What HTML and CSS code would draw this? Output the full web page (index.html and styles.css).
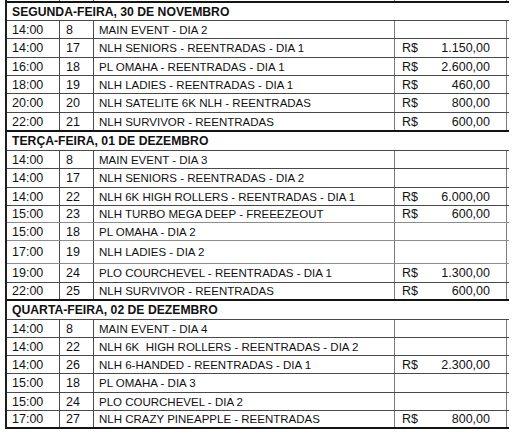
FILE: index.html
```html
<!DOCTYPE html>
<html lang="pt">
<head>
<meta charset="utf-8">
<title>Programação</title>
<link rel="stylesheet" href="styles.css">
</head>
<body>
<div class="sheet">
  <div class="row stub"><div class="c t"></div><div class="c n"></div><div class="c e"></div><div class="c p"></div></div>

  <div class="row head"><div class="hc">SEGUNDA-FEIRA, 30 DE NOVEMBRO</div></div>
  <div class="row"><div class="c t">14:00</div><div class="c n">8</div><div class="c e">MAIN EVENT - DIA 2</div><div class="c p"></div></div>
  <div class="row h19"><div class="c t">14:00</div><div class="c n">17</div><div class="c e">NLH SENIORS - REENTRADAS - DIA 1</div><div class="c p"><span>R$</span><span>1.150,00</span></div></div>
  <div class="row"><div class="c t">16:00</div><div class="c n">18</div><div class="c e">PL OMAHA - REENTRADAS - DIA 1</div><div class="c p"><span>R$</span><span>2.600,00</span></div></div>
  <div class="row"><div class="c t">18:00</div><div class="c n">19</div><div class="c e">NLH LADIES - REENTRADAS - DIA 1</div><div class="c p"><span>R$</span><span>460,00</span></div></div>
  <div class="row h19"><div class="c t">20:00</div><div class="c n">20</div><div class="c e">NLH SATELITE 6K NLH - REENTRADAS</div><div class="c p"><span>R$</span><span>800,00</span></div></div>
  <div class="row h19 end"><div class="c t">22:00</div><div class="c n">21</div><div class="c e">NLH SURVIVOR - REENTRADAS</div><div class="c p"><span>R$</span><span>600,00</span></div></div>

  <div class="row head h19"><div class="hc">TERÇA-FEIRA, 01 DE DEZEMBRO</div></div>
  <div class="row"><div class="c t">14:00</div><div class="c n">8</div><div class="c e">MAIN EVENT - DIA 3</div><div class="c p"></div></div>
  <div class="row h19"><div class="c t">14:00</div><div class="c n">17</div><div class="c e">NLH SENIORS - REENTRADAS - DIA 2</div><div class="c p"></div></div>
  <div class="row"><div class="c t">14:00</div><div class="c n">22</div><div class="c e">NLH 6K HIGH ROLLERS - REENTRADAS - DIA 1</div><div class="c p"><span>R$</span><span>6.000,00</span></div></div>
  <div class="row h17 lt"><div class="c t">15:00</div><div class="c n">23</div><div class="c e">NLH TURBO MEGA DEEP - FREEEZEOUT</div><div class="c p"><span>R$</span><span>600,00</span></div></div>
  <div class="row lt"><div class="c t">15:00</div><div class="c n">18</div><div class="c e">PL OMAHA - DIA 2</div><div class="c p"></div></div>
  <div class="row h23 lt"><div class="c t">17:00</div><div class="c n">19</div><div class="c e">NLH LADIES - DIA 2</div><div class="c p"></div></div>
  <div class="row h19"><div class="c t">19:00</div><div class="c n">24</div><div class="c e">PLO COURCHEVEL - REENTRADAS - DIA 1</div><div class="c p"><span>R$</span><span>1.300,00</span></div></div>
  <div class="row end"><div class="c t">22:00</div><div class="c n">25</div><div class="c e">NLH SURVIVOR - REENTRADAS</div><div class="c p"><span>R$</span><span>600,00</span></div></div>

  <div class="row head h19"><div class="hc">QUARTA-FEIRA, 02 DE DEZEMBRO</div></div>
  <div class="row"><div class="c t">14:00</div><div class="c n">8</div><div class="c e">MAIN EVENT - DIA 4</div><div class="c p"></div></div>
  <div class="row"><div class="c t">14:00</div><div class="c n">22</div><div class="c e">NLH 6K  HIGH ROLLERS - REENTRADAS - DIA 2</div><div class="c p"></div></div>
  <div class="row"><div class="c t">14:00</div><div class="c n">26</div><div class="c e">NLH 6-HANDED - REENTRADAS - DIA 1</div><div class="c p"><span>R$</span><span>2.300,00</span></div></div>
  <div class="row h19"><div class="c t">15:00</div><div class="c n">18</div><div class="c e">PL OMAHA - DIA 3</div><div class="c p"></div></div>
  <div class="row"><div class="c t">15:00</div><div class="c n">24</div><div class="c e">PLO COURCHEVEL - DIA 2</div><div class="c p"></div></div>
  <div class="row end"><div class="c t">17:00</div><div class="c n">27</div><div class="c e">NLH CRAZY PINEAPPLE - REENTRADAS</div><div class="c p"><span>R$</span><span>800,00</span></div></div>
</div>
</body>
</html>
```

FILE: styles.css
```css
html, body {
  margin: 0;
  padding: 0;
  background: #ffffff;
}

body {
  font-family: "Liberation Sans", Arial, sans-serif;
  font-size: 11.5px;
  color: #111111;
}

.sheet {
  margin-left: 5px;
  width: 502px;
  border-left: 2px solid #1e1e1e;
}

.row {
  display: flex;
  box-sizing: border-box;
  height: 18px;
  border-bottom: 1px solid #4a4a4a;
}

.row.h17 { height: 17px; }
.row.h19 { height: 19px; }
.row.h23 { height: 23px; }

.row.lt { border-bottom-color: #8c8c8c; }

.row.end { border-bottom: 2px solid #141414; }

.row.stub {
  height: 3px;
  border-bottom: 2px solid #141414;
}

.c {
  display: flex;
  align-items: center;
  box-sizing: border-box;
  height: 100%;
  white-space: pre;
  border-right: 1px solid #4a4a4a;
}

.t { width: 53px; padding-left: 5px; font-size: 12.5px; }
.n { width: 34px; padding-left: 6px; font-size: 12.5px; }
.e { width: 301px; padding-left: 5px; border-right-color: #7a7a7a; }
.p {
  width: 112px;
  padding: 0 16px 0 7px;
  justify-content: space-between;
  font-size: 12.5px;
  border-right-color: #7a7a7a;
}

.head .hc {
  display: flex;
  align-items: center;
  height: 100%;
  padding-left: 5px;
  font-size: 12.2px;
  font-weight: bold;
  white-space: pre;
}
```
